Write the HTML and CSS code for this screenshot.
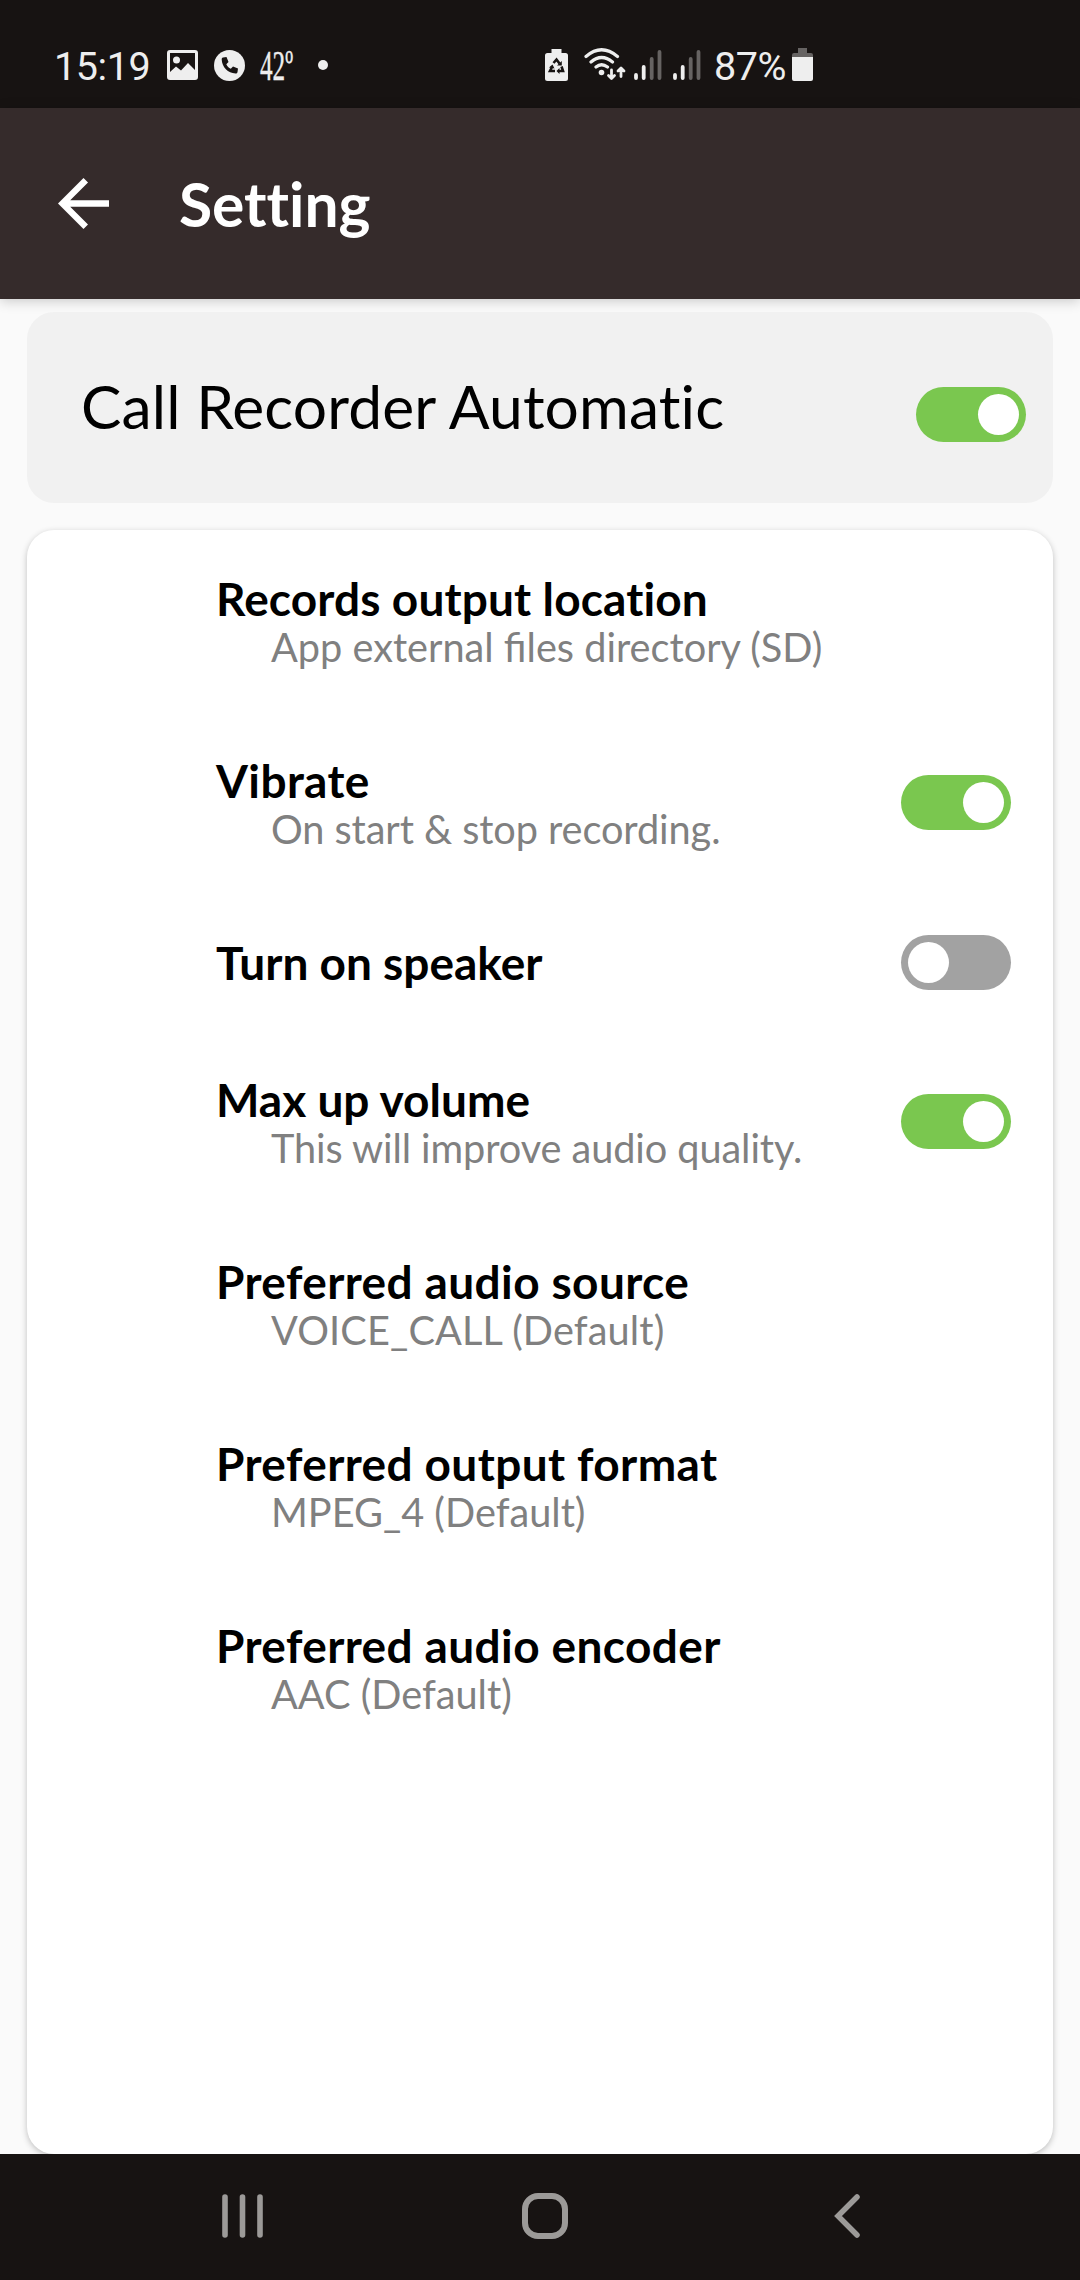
FILE: index.html
```html
<!DOCTYPE html>
<html lang="en">
<head>
<meta charset="utf-8">
<title>Setting</title>
<link rel="stylesheet" href="styles.css">
</head>
<body>
<div class="screen">
  <div class="status">
    <span class="time">15:19</span>
    <svg class="s-image" width="31" height="30" viewBox="0 0 31 30"><path fill="#eee" fill-rule="evenodd" d="M3 0H28a3 3 0 0 1 3 3V27a3 3 0 0 1-3 3H3a3 3 0 0 1-3-3V3a3 3 0 0 1 3-3ZM3 3V22L9 16.500L14 20.500L21 13L28 20V3Z"/><circle cx="9.500" cy="10" r="3.500" fill="#eee"/></svg>
    <svg class="s-phone" width="31" height="31" viewBox="0 0 31 31"><circle cx="15.500" cy="15.500" r="15.500" fill="#eee"/><path fill="#171312" d="M9 7.500L12.500 7L14.500 12L12.300 14.200C13.300 16.300 14.700 17.700 16.800 18.700L19 16.500L24 18.500L23.500 22C23.300 23 22.600 23.500 21.500 23.500C14 23.200 8 17 7.700 9.500C7.700 8.400 8 7.700 9 7.500Z"/></svg>
    <span class="temp"><span class="temp-in">42º</span></span>
    <span class="dot"></span>
    <svg class="s-saver" width="23" height="32" viewBox="0 0 23 32"><path fill="#eee" d="M6.500 0H16.500V4H20.500Q23 4 23 6.500V29.500Q23 32 20.500 32H2.500Q0 32 0 29.500V6.500Q0 4 2.500 4H6.500Z"/><path d="M8.500 14L11.500 10.500L14.500 14.500M16.500 17.500L18 22H13.500M10 22H5L7 18" fill="none" stroke="#171312" stroke-width="2.600"/><path fill="#171312" d="M16.800 12V16.500H12ZM14.500 19V25L11.500 22ZM4 18.500L7.500 15.500L9.500 19.500Z"/></svg>
    <svg class="s-wifi" width="42" height="33" viewBox="0 0 42 33"><g fill="none" stroke="#eee" stroke-width="3.200" stroke-linecap="round"><path d="M2 8.500Q17.500-5 33.500 8.500M7 14Q17.500 5 28.500 14M12 19Q17.500 14.500 23.500 19"/></g><circle cx="17.500" cy="24.500" r="2.800" fill="#eee"/><path d="M27.500 22v8M24.500 27.500l3 3l3-3M37 28.500v-8M34 23l3-3l3 3" fill="none" stroke="#eee" stroke-width="2.800" stroke-linecap="round" stroke-linejoin="round"/></svg>
    <svg class="s-sig1" width="28" height="30" viewBox="0 0 28 30"><path d="M2 25v3M9.700 17v11" stroke="#eee" stroke-width="3.800" stroke-linecap="round"/><path d="M17.700 9v19M25.500 2v26" stroke="#666362" stroke-width="3.800" stroke-linecap="round"/></svg>
    <svg class="s-sig2" width="28" height="30" viewBox="0 0 28 30"><path d="M2 25v3M9.700 17v11" stroke="#eee" stroke-width="3.800" stroke-linecap="round"/><path d="M17.700 9v19M25.500 2v26" stroke="#666362" stroke-width="3.800" stroke-linecap="round"/></svg>
    <span class="percent">87%</span>
    <svg class="s-batt" width="21" height="33" viewBox="0 0 21 33"><path fill="#666362" d="M6 0H15V5H19Q21 5 21 7V10H0V7Q0 5 2 5H6Z"/><path fill="#eee" d="M0 9H21V31Q21 33 19 33H2Q0 33 0 31Z"/></svg>
  </div>
  <header class="bar">
    <svg class="back" width="51" height="51" viewBox="4 4 16 16"><path fill="#fff" d="M20 11H7.830l5.590-5.590L12 4l-8 8 8 8 1.410-1.410L7.830 13H20v-2z"/></svg>
    <h1 class="title">Setting</h1>
  </header>
  <main class="content">
    <section class="auto"><span class="auto-label">Call Recorder Automatic</span><span class="toggle on"></span></section>
    <section class="card">
      <div class="row"><div class="text"><div class="name loose">Records output location</div><div class="sub">App external files directory (SD)</div></div></div>
      <div class="row"><div class="text"><div class="name wide">Vibrate</div><div class="sub tight">On start &amp; stop recording.</div></div><span class="toggle on"></span></div>
      <div class="row single"><div class="text"><div class="name">Turn on speaker</div></div><span class="toggle"></span></div>
      <div class="row"><div class="text"><div class="name">Max up volume</div><div class="sub tight">This will improve audio quality.</div></div><span class="toggle on"></span></div>
      <div class="row"><div class="text"><div class="name wide">Preferred audio source</div><div class="sub loose">VOICE_CALL (Default)</div></div></div>
      <div class="row"><div class="text"><div class="name wide">Preferred output format</div><div class="sub">MPEG_4 (Default)</div></div></div>
      <div class="row"><div class="text"><div class="name wide">Preferred audio encoder</div><div class="sub">AAC (Default)</div></div></div>
    </section>
  </main>
  <nav class="nav">
    <svg class="n-recent" width="42" height="44" viewBox="0 0 42 44"><path d="M3 3v38M20.500 3v38M38 3v38" stroke="#9c9a98" stroke-width="5.600" stroke-linecap="round"/></svg>
    <svg class="n-home" width="46" height="46" viewBox="0 0 46 46"><rect x="3" y="3" width="40" height="40" rx="13" fill="none" stroke="#9c9a98" stroke-width="6"/></svg>
    <svg class="n-back" width="26" height="44" viewBox="0 0 26 44"><path d="M23 3L4 22L23 41" fill="none" stroke="#9c9a98" stroke-width="5.500" stroke-linecap="round"/></svg>
  </nav>
</div>
</body>
</html>
```
FILE: styles.css
```css
* { box-sizing: border-box; }
body { margin: 0; }
svg { display: block; flex: none; }
.screen {
  width: 1080px;
  height: 2280px;
  display: flex;
  flex-direction: column;
  overflow: hidden;
  background: #fafafa;
  font-family: Lato, sans-serif;
  font-variant-ligatures: none;
}
.status {
  height: 108px;
  flex: none;
  display: flex;
  align-items: flex-start;
  padding: 48px 0 0 54px;
  background: #171312;
  color: #eee;
  font-family: Roboto, sans-serif;
}
.time, .percent { font-size: 39.500px; line-height: 38px; white-space: nowrap; letter-spacing: -.4px; }
.time { width: 113px; }
.s-image { margin-top: 2px; }
.s-phone { margin: 2px 0 0 16px; }
.temp { width: 35px; margin-left: 15px; font: 42px/37px "Liberation Serif", serif; -webkit-text-stroke: .4px #eee; }
.temp-in { display: inline-block; transform: scaleX(.6); transform-origin: 0 0; }
.dot { width: 10px; height: 10px; border-radius: 50%; background: #eee; margin: 12px 0 0 23px; }
.s-saver { margin: 1px 0 0 217px; }
.s-wifi { margin-left: 16px; }
.s-sig1 { margin: 2px 0 0 8px; }
.s-sig2 { margin: 2px 0 0 11px; }
.percent { width: 78px; margin-left: 13px; }
.bar {
  height: 191px;
  flex: none;
  display: flex;
  align-items: center;
  padding-left: 58px;
  background: #352b2b;
  box-shadow: 0 2px 12px rgba(0, 0, 0, .2);
}
.title { margin: 0 0 0 70px; font-size: 60.500px; line-height: 72px; font-weight: 700; color: #fff; }
.content { flex: 1; min-height: 0; display: flex; flex-direction: column; gap: 27px; padding: 13px 27px 0; }
.auto {
  height: 191px;
  flex: none;
  display: flex;
  align-items: flex-start;
  justify-content: space-between;
  padding: 58px 27px 0 54px;
  border-radius: 27px;
  background: #f1f1f1;
}
.auto .toggle { margin-top: 17px; }
.auto-label { font-size: 60.500px; line-height: 72px; letter-spacing: .13px; color: #000; }
.toggle {
  width: 110px;
  height: 55px;
  flex: none;
  display: flex;
  padding: 7px;
  border-radius: 28px;
  background: #a2a2a2;
}
.toggle::before { content: ""; width: 41px; height: 41px; border-radius: 50%; background: #fff; }
.toggle.on { background: #7ac74f; justify-content: flex-end; }
.card {
  flex: 1;
  border-radius: 27px;
  background: #fff;
  box-shadow: 0 2px 6px rgba(0, 0, 0, .24);
}
.row { height: 182px; display: flex; justify-content: space-between; align-items: center; padding: 0 42px 0 189px; }
.row .text { padding-top: 2px; }
.row .toggle { margin-bottom: 2px; }
.row.single { height: 137px; }
.row.single .text { padding-top: 0; }
.row.single .toggle { margin-bottom: 0; }
.name { font-size: 46px; line-height: 50px; font-weight: 700; color: #000; }
.sub { padding-left: 55px; font-size: 39.700px; line-height: 46px; color: #808080; font-variant-ligatures: common-ligatures; }
.loose { letter-spacing: .13px; }
.wide { letter-spacing: .38px; }
.sub.tight { letter-spacing: -.08px; }
.nav {
  height: 126px;
  flex: none;
  display: flex;
  align-items: center;
  padding: 0 0 2px 222px;
  background: #171312;
}
.n-home { margin-left: 258px; }
.n-back { margin-left: 266px; }
```
